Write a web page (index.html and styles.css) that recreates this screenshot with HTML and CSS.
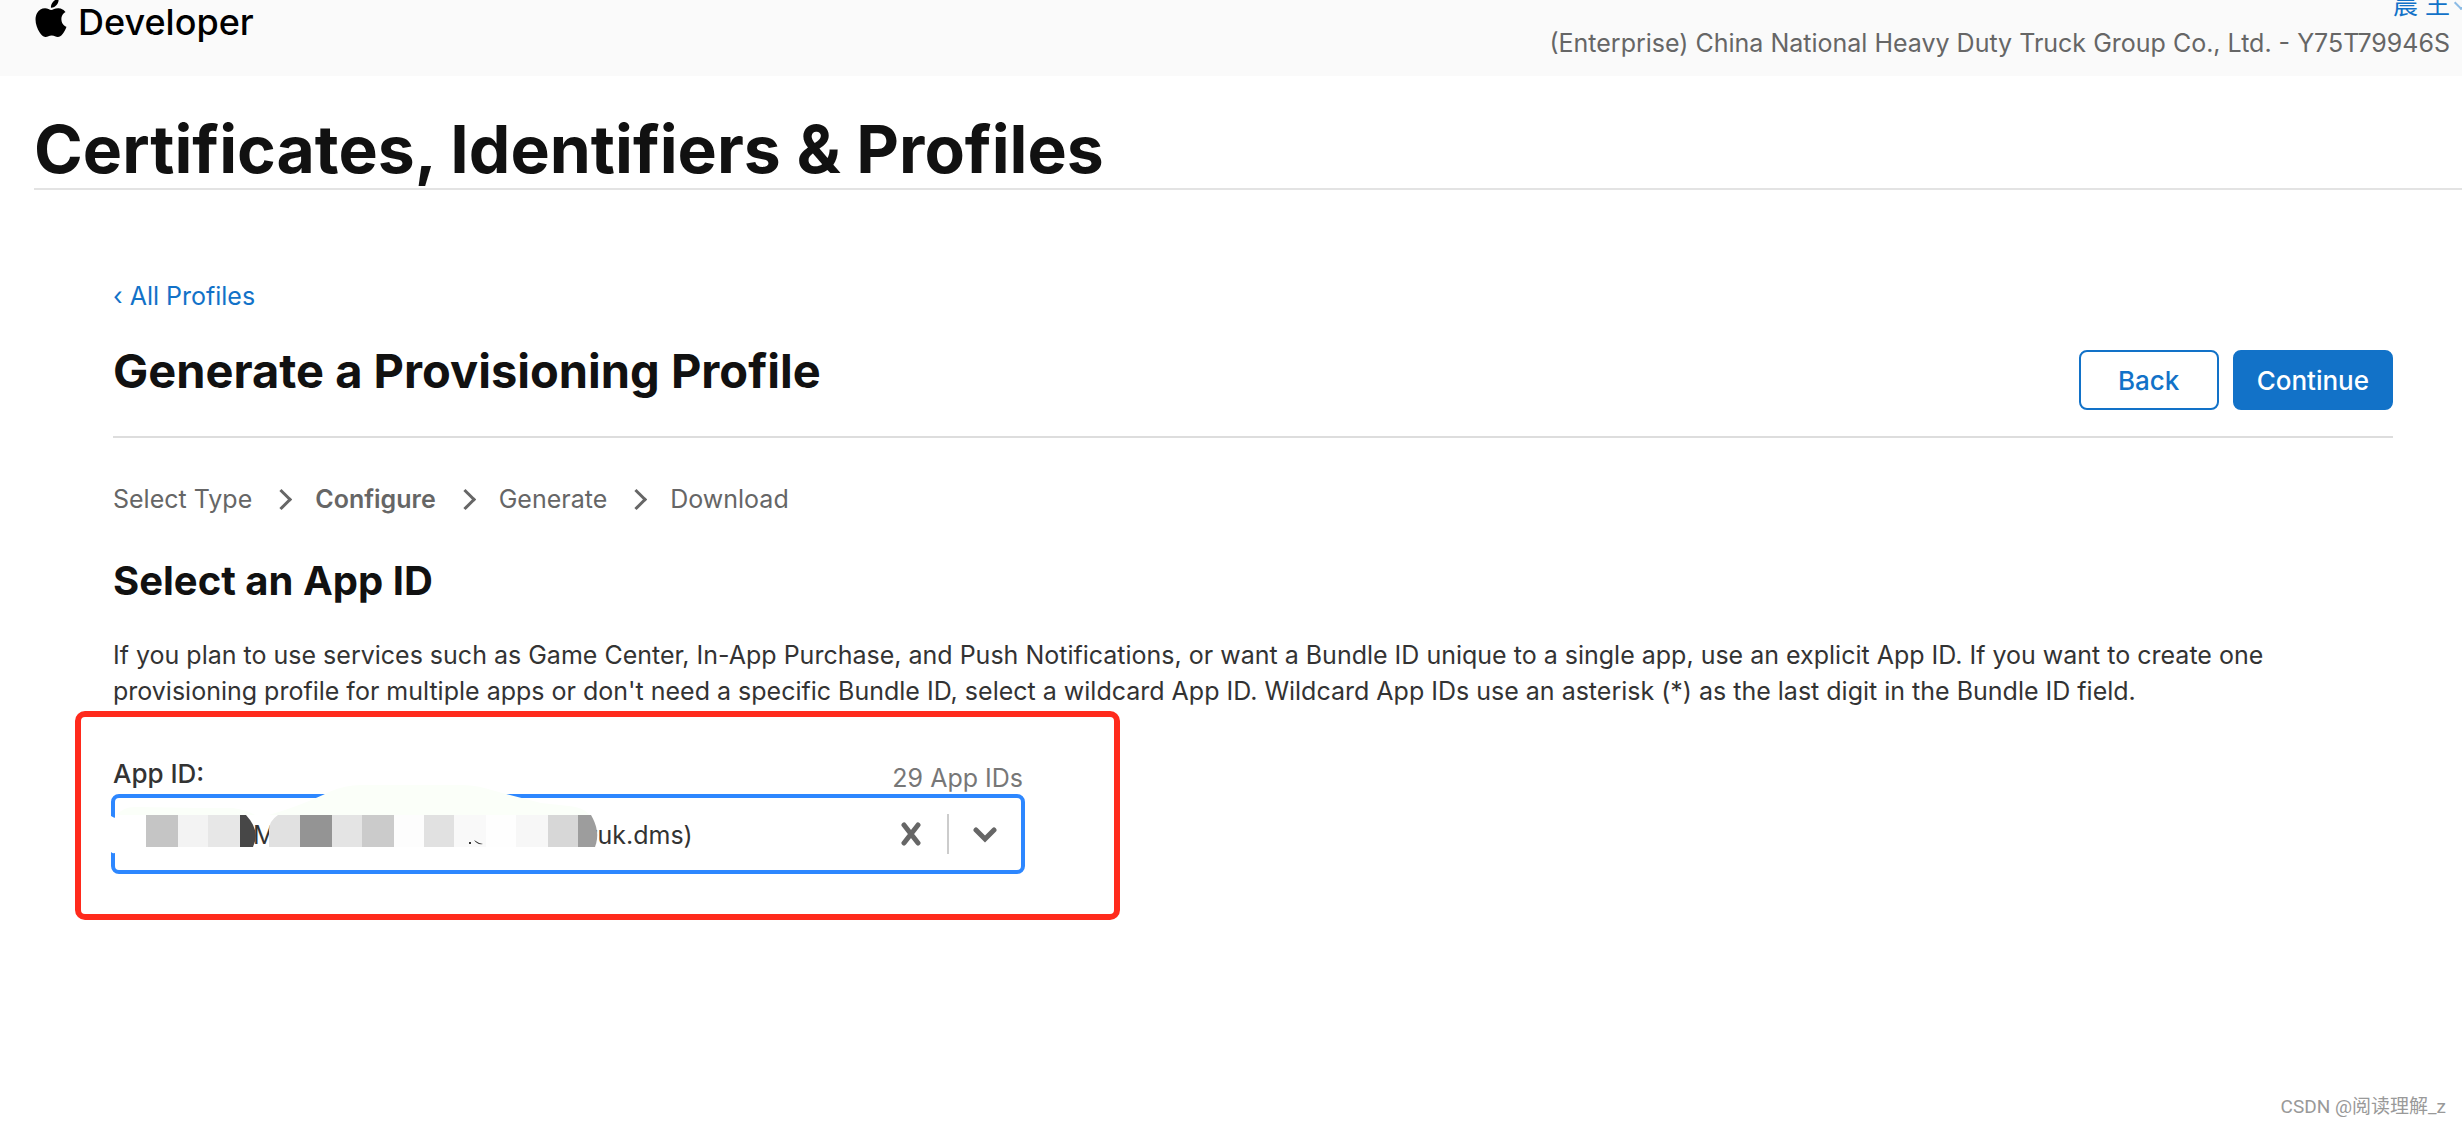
FILE: index.html
```html
<!DOCTYPE html>
<html lang="en">
<head>
    <meta charset="UTF-8">
    <meta name="viewport" content="width=device-width, initial-scale=1.0">
    <title>Certificates, Identifiers &amp; Profiles</title>
    <link rel="stylesheet" href="styles.css">
</head>
<body>
    <header class="header">
        <a class="logo" href="#">
            <svg viewBox="0 0 24 24" aria-hidden="true"><path d="M12.152 6.896c-.948 0-2.415-1.078-3.96-1.04-2.04.027-3.91 1.183-4.961 3.014-2.117 3.675-.546 9.103 1.519 12.09 1.013 1.454 2.208 3.09 3.792 3.039 1.52-.065 2.09-.987 3.935-.987 1.831 0 2.35.987 3.96.948 1.637-.026 2.676-1.48 3.676-2.948 1.156-1.688 1.636-3.325 1.662-3.415-.039-.013-3.182-1.221-3.22-4.857-.026-3.04 2.48-4.494 2.597-4.559-1.429-2.09-3.623-2.324-4.39-2.376-2-.156-3.675 1.09-4.61 1.09zM15.53 3.83c.843-1.012 1.4-2.427 1.245-3.83-1.207.052-2.662.805-3.532 1.818-.78.896-1.454 2.338-1.273 3.714 1.338.104 2.715-.688 3.559-1.701"/></svg>
            <span>Developer</span>
        </a>
        <div class="account">
            <a class="account-name" href="#">晨 王</a>
            <span class="account-team">(Enterprise) China National Heavy Duty Truck Group Co., Ltd. - Y75T79946S</span>
        </div>
    </header>

    <h1 class="page-title">Certificates, Identifiers &amp; Profiles</h1>

    <main class="content">
        <a class="back-link" href="#">‹ All Profiles</a>

        <div class="heading">
            <h2>Generate a Provisioning Profile</h2>
            <div class="actions">
                <button class="btn" type="button">Back</button>
                <button class="btn btn-primary" type="submit" form="app-form">Continue</button>
            </div>
        </div>

        <ol class="steps">
            <li>Select Type</li>
            <li class="on">Configure</li>
            <li>Generate</li>
            <li>Download</li>
        </ol>

        <h3>Select an App ID</h3>
        <p class="desc">If you plan to use services such as Game Center, In-App Purchase, and Push Notifications, or want a Bundle ID unique to a single app, use an explicit App ID. If you want to create one provisioning profile for multiple apps or don't need a specific Bundle ID, select a wildcard App ID. Wildcard App IDs use an asterisk (*) as the last digit in the Bundle ID field.</p>

        <form class="field" id="app-form">
            <div class="field-top">
                <label for="app-id">App ID:</label>
                <span class="count">29 App IDs</span>
            </div>
            <div class="select-box">
                <select id="app-id">
                    <option>M&emsp;&emsp;&emsp;&emsp;&emsp;&emsp;&emsp;&emsp;&emsp;&emsp;&emsp;&emsp;&ensp;ruk.dms)</option>
                </select>
                <button class="clear" type="button" aria-label="Clear">
                    <svg viewBox="0 0 20 24"><path d="M3 3l14 18M17 3L3 21"/></svg>
                </button>
                <svg class="arrow" viewBox="0 0 24 16"><path d="M3 3l9 9L21 3"/></svg>

                <!-- masked part of the name -->
                <svg class="mask" viewBox="0 0 500 80" aria-hidden="true">
                    <path fill="#fff" d="M0 22Q6 26 8 22H36V54H8Q4 62 0 58z"/>
                    <path fill="#fbfff9" d="M6 21Q12 13 24 13L90 14 122 14Q136 16 144 21z"/>
                    <path fill="#fbfff9" d="M158 21C182 14 204 5 218-2Q234-9 250-9H352Q366-9 384-3L430 9 458 12Q472 13 479 21z"/>
                    <path fill="#c5c5c5" d="M35 21h32v32H35z"/>
                    <path fill="#f3f3f3" d="M67 21h30v32H67z"/>
                    <path fill="#e7e7e7" d="M97 21h32v32H97z"/>
                    <path fill="#474747" d="M129 21h6Q150 37 142 53h-13z"/>
                    <path fill="#e1e1e1" d="M189 21h-22Q158 27 158 36v17h31z"/>
                    <path fill="#949494" d="M189 21h32v32h-32z"/>
                    <path fill="#e4e4e4" d="M221 21h30v32h-30z"/>
                    <path fill="#cbcbcb" d="M251 21h32v32h-32z"/>
                    <path fill="#fdfdfd" d="M283 21h30v32h-30z"/>
                    <path fill="#e1e1e1" d="M313 21h30v32h-30z"/>
                    <path fill="#f9f9f9" d="M343 21h32v32h-32z"/>
                    <path fill="#fefefe" d="M375 21h30v32h-30z"/>
                    <path fill="#f7f7f7" d="M405 21h32v32h-32z"/>
                    <path fill="#d7d7d7" d="M437 21h30v32h-30z"/>
                    <path fill="#9d9d9d" d="M467 21h13Q490 38 484 53h-17z"/>
                    <path fill="#333" d="M358 48h2v2h-2zM363 46q4 3 9 4-6 1-9-4z"/>
                </svg>
            </div>
        </form>
    </main>

    <footer class="credit">CSDN @阅读理解_z</footer>
</body>
</html>
```

FILE: styles.css
```css
* {padding: 0;margin: 0;box-sizing: border-box;}
body {
    display: flex;
    flex-direction: column;
    min-height: 100vh;
    overflow-x: hidden;
    background: #fff;
    color: #333;
    font: 25px/36px Inter, "Noto Sans CJK SC", sans-serif;
}
a {color: #1272c8;text-decoration: none;}
h1, h2, h3 {color: #111;font-weight: 700;}

/* header, scrolled a little off the top */
.header {
    display: flex;
    justify-content: space-between;
    align-items: center;
    height: 104px;
    margin-top: -28px;
    padding: 0 12px 0 32px;
    background: #fafafa;
}
.logo {display: flex;align-items: center;gap: 8px;margin-bottom: 12px;color: #000;font-size: 36px;font-weight: 500;}
.logo svg {width: 38px;height: 38px;}
.logo span {padding-top: 8px;}
.account {display: flex;flex-direction: column;align-items: flex-end;line-height: 38px;}
.account-name {position: relative;}
.account-name::after {
    content: "";
    position: absolute;
    top: 12px;
    right: -16px;
    width: 8px;
    height: 8px;
    border: solid #8bbbe6;
    border-width: 0 2px 2px 0;
    transform: rotate(45deg);
}
.account-team {color: #666;}

.page-title {
    margin: 38px 0 0 34px;
    padding-bottom: 4px;
    border-bottom: 2px solid #e3e3e3;
    font-size: 66px;
    line-height: 70px;
}

.content {padding: 88px 69px 0 113px;}
.back-link {display: block;}
.heading {
    display: flex;
    justify-content: space-between;
    align-items: flex-start;
    margin-top: 36px;
    padding-bottom: 26px;
    border-bottom: 2px solid #ddd;
}
.heading h2 {font-size: 47px;line-height: 42px;}
.actions {display: flex;gap: 14px;}
.btn {
    height: 60px;
    min-width: 140px;
    padding: 0 22px;
    border: 2px solid #1272c8;
    border-radius: 8px;
    background: #fff;
    color: #1272c8;
    font-family: inherit;
    font-size: 26px;
    font-weight: 500;
}
.btn-primary {background: #1272c8;color: #fff;}

.steps {display: flex;margin-top: 43px;color: #666;list-style: none;}
.steps li {display: flex;align-items: center;}
.steps li + li::before {
    content: "";
    width: 12px;
    height: 12px;
    margin: 0 26px 0 22px;
    border: solid #666;
    border-width: 3px 3px 0 0;
    transform: rotate(45deg);
}
.steps .on {font-weight: 600;}

h3 {margin-top: 40px;font-size: 40px;line-height: 48px;}
.desc {margin-top: 32px;}

.field {position: relative;width: 910px;margin-top: 43px;}
.field::before {
    content: "";
    position: absolute;
    inset: -41px -97px -46px -38px;
    border: 6px solid #ff2a1c;
    border-radius: 10px;
}
.field-top {display: flex;justify-content: space-between;height: 42px;}
.field label {padding-top: 4px;font-size: 26px;font-weight: 500;}
.count {padding-top: 8px;color: #777;}
.select-box {position: relative;height: 80px;margin: 0 -2px;}
.select-box select {
    width: 100%;
    height: 100%;
    padding: 2px 150px 0 138px;
    border: 4px solid #2d87ff;
    border-radius: 8px;
    outline: none;
    background: #fff;
    color: #333;
    font: inherit;
    appearance: none;
}
.clear {
    position: absolute;
    top: 20px;
    right: 76px;
    display: flex;
    align-items: center;
    height: 40px;
    padding-right: 26px;
    border: 0;
    border-right: 2px solid #ccc;
    background: none;
}
.clear svg {width: 20px;height: 24px;}
.arrow {position: absolute;top: 33px;right: 28px;width: 24px;height: 16px;pointer-events: none;}
.clear path, .arrow path {fill: none;stroke: #666;stroke-width: 5;stroke-linecap: round;}
.mask {position: absolute;top: 0;left: 0;width: 500px;height: 80px;overflow: visible;pointer-events: none;}

.credit {
    margin-top: auto;
    padding: 0 16px 2px;
    color: #999;
    font: 19px/30px Roboto, "Noto Sans CJK SC", sans-serif;
    text-align: right;
}
```
